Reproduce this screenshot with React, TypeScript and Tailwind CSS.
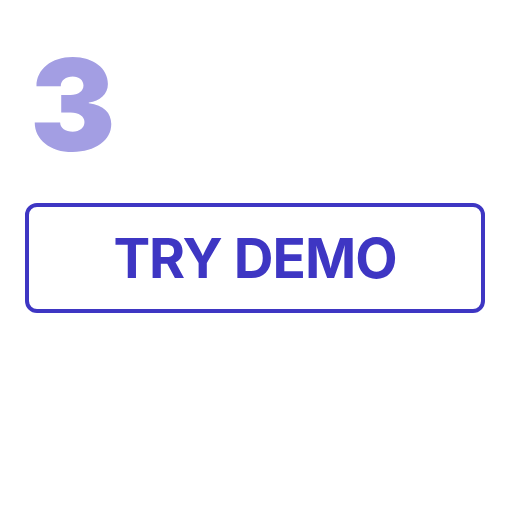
export default function App() {
  return (
    <div className="w-[512px] h-[512px] bg-white px-[25px] pt-[41px] font-['Inter',sans-serif]">
      <div className="text-[128px] leading-none font-black text-[#a39ee3] pl-[5px]">3</div>
      <button className="mt-[34px] w-[460px] h-[110px] rounded-[12px] border-4 border-[#3e36c3] flex items-center justify-center">
        <span className="text-[55px] leading-none font-bold tracking-[-1px] text-[#3e36c3]">TRY DEMO</span>
      </button>
    </div>
  );
}
